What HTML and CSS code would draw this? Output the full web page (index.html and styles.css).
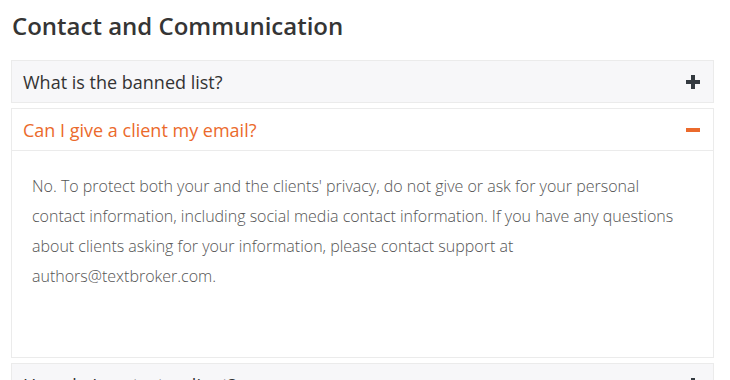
FILE: index.html
```html
<!DOCTYPE html>
<html>
<head>
<meta charset="utf-8">
<link rel="stylesheet" href="styles.css">
</head>
<body>
<div class="page">
  <h2 class="title">Contact and Communication</h2>
  <div class="panel">
    <div class="panel-head">
      <span class="q">What is the banned list?</span>
      <svg class="ico" width="14" height="14" viewBox="0 0 14 14"><rect x="5" y="0" width="4" height="14" fill="#343a40"/><rect x="0" y="5" width="14" height="4" fill="#343a40"/></svg>
    </div>
  </div>
  <div class="panel open">
    <div class="panel-head">
      <span class="q">Can I give a client my email?</span>
      <svg class="ico" width="14" height="14" viewBox="0 0 14 14"><rect x="0" y="5" width="14" height="4" fill="#eb6a2c"/></svg>
    </div>
    <div class="panel-body">
      <p>No. To protect both your and the clients' privacy, do not give or ask for your personal contact information, including social media contact information. If you have any questions about clients asking for your information, please contact support at authors@textbroker.com.</p>
    </div>
  </div>
  <div class="panel">
    <div class="panel-head">
      <span class="q">How do I contact a client?</span>
      <svg class="ico" width="14" height="14" viewBox="0 0 14 14"><rect x="5" y="0" width="4" height="14" fill="#343a40"/><rect x="0" y="5" width="14" height="4" fill="#343a40"/></svg>
    </div>
  </div>
</div>
</body>
</html>
```
FILE: styles.css
```css
html, body {
  margin: 0;
  padding: 0;
  background: #fff;
}
.page {
  padding: 8px 16px 0 11px;
  font-family: "Open Sans", sans-serif;
  color: #333;
}
.title {
  margin: 0 0 16px 1px;
  font-size: 24px;
  font-weight: 600;
  line-height: 36px;
  color: #353535;
}
.panel {
  border: 1px solid #ebebeb;
  margin-bottom: 5px;
  background: #fff;
}
.panel-head {
  display: flex;
  align-items: center;
  justify-content: space-between;
  height: 41px;
  padding: 0 13px 0 11px;
  background: #f7f7f9;
}
.q {
  font-size: 18px;
  color: #333;
}
.ico { display: block; }
.open .panel-head {
  background: #fff;
  border-bottom: 1px solid #ebebeb;
}
.open .q { color: #eb6a2c; }
.panel-body {
  padding: 20px 20px 0 20px;
  height: 186px;
}
.panel-body p {
  margin: 0;
  font-size: 16px;
  font-weight: 300;
  line-height: 30px;
  color: #555;
}
```
